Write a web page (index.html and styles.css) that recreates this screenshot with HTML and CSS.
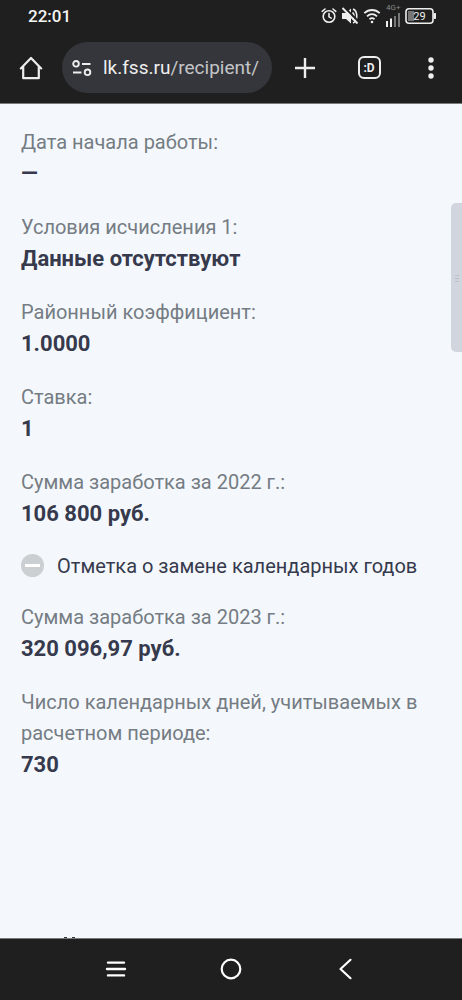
FILE: index.html
```html
<!DOCTYPE html>
<html lang="ru">
<head>
<meta charset="utf-8">
<meta name="viewport" content="width=device-width, initial-scale=1">
<title>lk.fss.ru</title>
<link rel="stylesheet" href="styles.css">
</head>
<body>
<header class="chrome">
  <div class="status">
    <time class="clock">22:01</time>
    <div class="status-icons">
      <svg width="16" height="24" viewBox="0 0 16 24" fill="none" stroke="#eee" stroke-width="1.6" stroke-linecap="round"><circle cx="8" cy="12.5" r="5.8"/><path d="M1.2 7.3 4 5M14.8 7.3 12 5M8 9.5v3.4l2.2 1.2"/></svg>
      <svg width="18" height="24" viewBox="0 0 18 24" fill="none"><path d="M1 9h4l5-4.6v15.2L5 15H1z" fill="#eee"/><path d="M11.5 8.5c2 1.500 2 5.500 0 7M12 5c5 2 5 12 0 14" stroke="#eee" stroke-width="1.600"/><path d="m3 3 15 15" stroke="#1f1f1f" stroke-width="2"/><path d="m1.500 4 15 15.500" stroke="#eee" stroke-width="1.800"/></svg>
      <svg width="18" height="24" viewBox="0 0 18 24" fill="none" stroke="#eee" stroke-width="1.800"><path d="M1.300 9.200c4.500-4.300 10.900-4.300 15.400 0M4 12.300c3-2.800 7-2.800 10 0M6.500 15.200c1.600-1.400 3.400-1.400 5 0"/><circle cx="9" cy="18" r="1.300" fill="#eee" stroke="none"/></svg>
      <svg class="signal" width="16" height="24" viewBox="0 0 16 24"><text x="1" y="6" class="network">4G+</text><path d="M2 17v6M6 14.500V23" stroke="#eee" stroke-width="2"/><path d="M10 12v11M14 9V23" stroke="#777" stroke-width="2"/></svg>
      <svg width="32" height="24" viewBox="0 0 32 24"><rect x="1" y="4.800" width="27" height="14.400" rx="3" fill="none" stroke="#eee" stroke-width="1.600"/><path d="M3 7h6v10H3z" fill="#777"/><path d="M29 9.500h1.500v5H29z" fill="#eee" stroke="#eee" stroke-linejoin="round"/><text x="14.500" y="16" text-anchor="middle" class="charge">29</text></svg>
    </div>
  </div>
  <div class="toolbar">
    <button class="tool" aria-label="Home"><svg width="26" height="26" viewBox="0 0 26 26" fill="none" stroke="#eee" stroke-width="2.200" stroke-linejoin="round" stroke-linecap="round"><path d="M2.800 13.400 13 3l10.200 10.400M5.200 11.500v11.700h15.600V11.500"/></svg></button>
    <button class="address"><svg width="22" height="18" viewBox="0 0 22 18" fill="none" stroke="#eee" stroke-width="1.900"><circle cx="5" cy="4.800" r="2.800"/><path d="M11 5h8.500M2 13.500h8.500"/><circle cx="16.500" cy="13.300" r="2.800"/></svg><span class="url">lk.fss.ru<span class="path">/recipient/</span></span></button>
    <button class="tool add" aria-label="New tab"><svg width="24" height="24" viewBox="0 0 24 24" stroke="#eee" stroke-width="2.400"><path d="M2 12h20M12 2v20"/></svg></button>
    <button class="tool" aria-label="Tabs"><span class="tabs">:D</span></button>
    <button class="tool" aria-label="Menu"><svg width="8" height="24" viewBox="0 0 8 24" fill="#eee"><circle cx="4" cy="4" r="2.700"/><circle cx="4" cy="12" r="2.700"/><circle cx="4" cy="20" r="2.700"/></svg></button>
  </div>
</header>
<main class="page">
  <dl class="item"><dt>Дата начала работы:</dt><dd>—</dd></dl>
  <dl class="item"><dt>Условия исчисления 1:</dt><dd>Данные отсутствуют</dd></dl>
  <dl class="item"><dt>Районный коэффициент:</dt><dd>1.0000</dd></dl>
  <dl class="item"><dt>Ставка:</dt><dd>1</dd></dl>
  <dl class="item"><dt>Сумма заработка за 2022 г.:</dt><dd>106 800 руб.</dd></dl>
  <label class="check" for="swap"><input type="checkbox" id="swap" disabled><span>Отметка о замене календарных годов</span></label>
  <dl class="item"><dt>Сумма заработка за 2023 г.:</dt><dd>320 096,97 руб.</dd></dl>
  <dl class="item"><dt>Число календарных дней, учитываемых в расчетном периоде:</dt><dd>730</dd></dl>
  <svg class="next" width="14" height="1" viewBox="0 0 14 1" fill="#333"><path d="M1 0h3v1H1zM9 0h3v1H9z"/></svg>
  <div class="thumb"><svg width="4" height="8" viewBox="0 0 4 8" stroke="#b9bec7"><path d="M0 1.500h4M0 4.500h4M0 7.500h4"/></svg></div>
</main>
<nav class="system">
  <button aria-label="Recent"><svg width="22" height="22" viewBox="0 0 22 22" stroke="#fff" stroke-width="2.400" stroke-linecap="round"><path d="M3 4.600h16M2 11h18M3 17.400h16"/></svg></button>
  <button aria-label="Home screen"><svg width="22" height="22" viewBox="0 0 22 22" fill="none" stroke="#fff" stroke-width="2.200"><circle cx="11" cy="11" r="9.300"/></svg></button>
  <button aria-label="Back"><svg width="22" height="22" viewBox="0 0 22 22" fill="none" stroke="#fff" stroke-width="2.200" stroke-linecap="round" stroke-linejoin="round"><path d="M15.500 1.800 5.500 11l10 9.200"/></svg></button>
</nav>
</body>
</html>
```
FILE: styles.css
```css
* { box-sizing: border-box; }
body {
  margin: 0;
  min-height: 100vh;
  display: flex;
  flex-direction: column;
  background: #f4f8fd;
  font-family: Roboto, "Noto Sans", sans-serif;
  font-size: 20px;
}
svg { display: block; flex: none; }
button {
  border: 0;
  padding: 0;
  background: none;
  color: #eee;
  font: inherit;
}
.chrome {
  background: #1f1f1f;
  border-bottom: 1px solid #77797b;
}
.status {
  height: 32px;
  padding: 0 25px 0 28px;
  display: flex;
  align-items: center;
  justify-content: space-between;
}
.clock {
  color: #f4f4f4;
  font-size: 17px;
  font-weight: 500;
}
.status-icons { display: flex; gap: 4px; }
.signal { overflow: visible; }
.network { font-size: 8px; fill: #888; }
.charge { font-size: 11px; fill: #eee; }
.toolbar {
  height: 71px;
  display: flex;
  align-items: center;
}
.tool {
  width: 62px;
  height: 51px;
  flex: none;
  display: flex;
  align-items: center;
  justify-content: center;
}
.add { width: 66px; }
.address {
  flex: 1;
  min-width: 0;
  height: 51px;
  padding: 0 9px;
  display: flex;
  align-items: center;
  gap: 10px;
  border-radius: 26px;
  background: #35363b;
  white-space: nowrap;
}
.url { font-size: 19px; }
.path { color: #c4c5c8; }
.tabs {
  width: 23px;
  height: 23px;
  display: grid;
  place-items: center;
  border: 2px solid #eee;
  border-radius: 6px;
  font-size: 12px;
  font-weight: 700;
}
.page {
  position: relative;
  flex: 1;
  padding: 23px 21px 0;
  display: flex;
  flex-direction: column;
  gap: 23px;
  color: #363a4c;
}
.item { margin: 0; line-height: 31px; }
.item dt { color: #757c83; }
.item dd {
  margin: 0;
  font-size: 22px;
  font-weight: 700;
}
.check {
  height: 27px;
  display: flex;
  align-items: center;
  gap: 13px;
}
.check input {
  appearance: none;
  flex: none;
  width: 23px;
  height: 23px;
  margin: 0;
  border-radius: 50%;
  background: linear-gradient(#fff, #fff) center / 15px 3px no-repeat #cccfd1;
}
.next { margin: auto 0 0 42px; }
.thumb {
  position: absolute;
  top: 99px;
  right: 0;
  width: 11px;
  height: 149px;
  display: grid;
  place-items: center;
  border-radius: 5px 0 0 5px;
  background: #d0d5de;
}
.system {
  height: 62px;
  padding: 0 58px 2px;
  display: flex;
  border-top: 1px solid #77797b;
  background: #1f1f1f;
}
.system button {
  flex: 1;
  display: grid;
  place-items: center;
}
```
